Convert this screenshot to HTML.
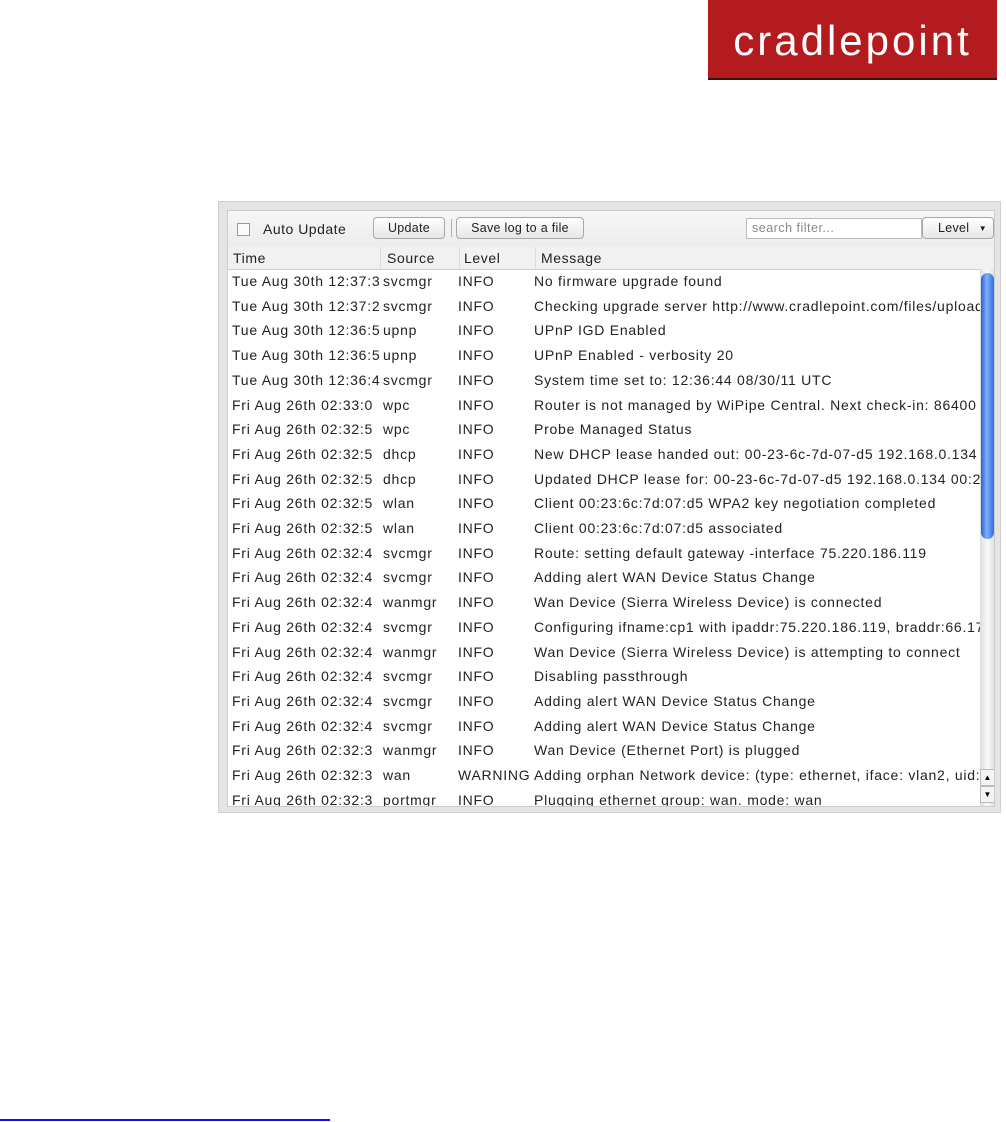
<!DOCTYPE html>
<html><head><style>
body{margin:0;width:1006px;height:1122px;background:#fff;position:relative;font-family:"Liberation Sans",sans-serif;overflow:hidden}
.logo{position:absolute;left:708px;top:0;width:289px;height:80px;background:#b31b1e;color:#fff;font-size:42px;text-align:center;line-height:82px;letter-spacing:3px;border-bottom:2px solid #3a1010;box-sizing:border-box}
.panel{position:absolute;left:218px;top:201px;width:783px;height:612px;background:#e4e4e4;border:1px solid #d0d0d0;box-sizing:border-box}
.inner{position:absolute;left:8px;top:8px;width:768px;height:597px;background:#fff;border:1px solid #ccc;box-sizing:border-box;overflow:hidden}
.tb{position:absolute;left:0;top:0;width:100%;height:36px;background:linear-gradient(#f6f6f6,#ececec);font-size:14px;color:#222;letter-spacing:0.5px}
.hdr{position:absolute;left:0;top:36px;width:100%;height:22px;background:#f1f1f1;border-bottom:1px solid #cfcfcf;font-size:14px;color:#222;letter-spacing:0.6px}
.hdr span{position:absolute;top:3px}
.hdr i{position:absolute;top:0;width:1px;height:22px;background:#ddd}
.btn{position:absolute;top:6px;height:22px;border:1px solid #a8a8a8;border-radius:4px;background:linear-gradient(#fff,#e6e6e6);font-size:12.5px;text-align:center;line-height:21px;box-sizing:border-box;letter-spacing:0.3px}
.row{position:absolute;left:0;height:24px;font-size:14px;letter-spacing:0.75px;color:#222;white-space:nowrap;width:752px;overflow:hidden}
.row span{position:absolute;top:3px;overflow:hidden}
.c1{left:4px;width:151px}.c2{left:155px;width:75px}.c3{left:230px}.c4{left:306px}
.sb{position:absolute;left:752px;top:58px;width:15px;height:539px;background:linear-gradient(90deg,#ddd,#fafafa,#ddd)}
.thumb{position:absolute;left:1px;top:4px;width:13px;height:266px;border-radius:7px;background:linear-gradient(90deg,#2a5fd0,#7fb0ff 45%,#2d6de0)}
</style></head><body>
<div class="logo">cradlepoint</div>
<div class="panel"><div class="inner">
<div class="tb">
<div style="position:absolute;left:9px;top:12px;width:11px;height:11px;border:1px solid #999;background:#fafafa"></div>
<div style="position:absolute;left:35px;top:10px">Auto Update</div>
<div class="btn" style="left:145px;width:72px">Update</div>
<div style="position:absolute;left:223px;top:8px;width:1px;height:18px;background:#aac"></div>
<div class="btn" style="left:228px;width:128px">Save log to a file</div>
<div style="position:absolute;left:518px;top:7px;width:176px;height:21px;border:1px solid #bbb;background:#fff;box-sizing:border-box;font-size:12.5px;color:#888;padding:2px 5px">search filter...</div>
<div class="btn" style="left:694px;width:72px;top:6px;text-align:left;padding-left:15px">Level <span style="position:absolute;right:6px;font-size:8px">▼</span></div>
</div>
<div class="hdr"><span style="left:5px">Time</span><i style="left:152px"></i><span style="left:159px">Source</span><i style="left:231px"></i><span style="left:236px">Level</span><i style="left:307px"></i><span style="left:313px">Message</span></div>
<div id="rows"></div>
<div class="sb"><div class="thumb"></div>
<div style="position:absolute;left:0;top:500px;width:15px;height:17px;border:1px solid #bbb;box-sizing:border-box;background:#f4f4f4;font-size:8px;text-align:center;line-height:15px">▲</div>
<div style="position:absolute;left:0;top:517px;width:15px;height:17px;border:1px solid #bbb;box-sizing:border-box;background:#f4f4f4;font-size:8px;text-align:center;line-height:15px">▼</div></div>
</div></div>
<div style="position:absolute;left:0;top:1119px;width:330px;height:2px;background:#1010ff"></div>
<script>
var d=[["Tue Aug 30th 12:37:3","svcmgr","INFO","No firmware upgrade found"],
["Tue Aug 30th 12:37:2","svcmgr","INFO","Checking upgrade server http://www.cradlepoint.com/files/uploads"],
["Tue Aug 30th 12:36:5","upnp","INFO","UPnP IGD Enabled"],
["Tue Aug 30th 12:36:5","upnp","INFO","UPnP Enabled - verbosity 20"],
["Tue Aug 30th 12:36:4","svcmgr","INFO","System time set to: 12:36:44 08/30/11 UTC"],
["Fri Aug 26th 02:33:0","wpc","INFO","Router is not managed by WiPipe Central. Next check-in: 86400 sec"],
["Fri Aug 26th 02:32:5","wpc","INFO","Probe Managed Status"],
["Fri Aug 26th 02:32:5","dhcp","INFO","New DHCP lease handed out: 00-23-6c-7d-07-d5 192.168.0.134 00"],
["Fri Aug 26th 02:32:5","dhcp","INFO","Updated DHCP lease for: 00-23-6c-7d-07-d5 192.168.0.134 00:23"],
["Fri Aug 26th 02:32:5","wlan","INFO","Client 00:23:6c:7d:07:d5 WPA2 key negotiation completed"],
["Fri Aug 26th 02:32:5","wlan","INFO","Client 00:23:6c:7d:07:d5 associated"],
["Fri Aug 26th 02:32:4","svcmgr","INFO","Route: setting default gateway -interface 75.220.186.119"],
["Fri Aug 26th 02:32:4","svcmgr","INFO","Adding alert WAN Device Status Change"],
["Fri Aug 26th 02:32:4","wanmgr","INFO","Wan Device (Sierra Wireless Device) is connected"],
["Fri Aug 26th 02:32:4","svcmgr","INFO","Configuring ifname:cp1 with ipaddr:75.220.186.119, braddr:66.174"],
["Fri Aug 26th 02:32:4","wanmgr","INFO","Wan Device (Sierra Wireless Device) is attempting to connect"],
["Fri Aug 26th 02:32:4","svcmgr","INFO","Disabling passthrough"],
["Fri Aug 26th 02:32:4","svcmgr","INFO","Adding alert WAN Device Status Change"],
["Fri Aug 26th 02:32:4","svcmgr","INFO","Adding alert WAN Device Status Change"],
["Fri Aug 26th 02:32:3","wanmgr","INFO","Wan Device (Ethernet Port) is plugged"],
["Fri Aug 26th 02:32:3","wan","WARNING","Adding orphan Network device: (type: ethernet, iface: vlan2, uid: wa"],
["Fri Aug 26th 02:32:3","portmgr","INFO","Plugging ethernet group: wan. mode: wan"]];
var h="";d.forEach(function(r,i){h+='<div class="row" style="top:'+(59+i*24.7)+'px"><span class="c1">'+r[0]+'</span><span class="c2">'+r[1]+'</span><span class="c3">'+r[2]+'</span><span class="c4">'+r[3]+'</span></div>'});
document.getElementById("rows").innerHTML=h;
</script>
</body></html>
